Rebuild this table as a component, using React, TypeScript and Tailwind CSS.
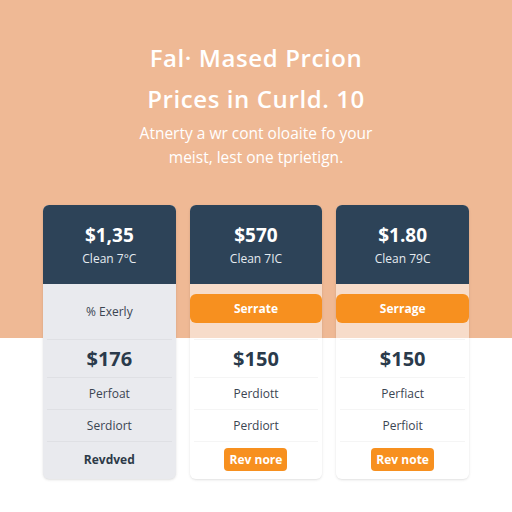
const plans = [
  {
    price: "$1,35",
    note: "Clean 7°C",
    lead: "% Exerly",
    amount: "$176",
    rows: ["Perfoat", "Serdiort"],
    cta: "Revdved",
    featured: false,
  },
  {
    price: "$570",
    note: "Clean 7IC",
    lead: "Serrate",
    amount: "$150",
    rows: ["Perdiott", "Perdiort"],
    cta: "Rev nore",
    featured: true,
  },
  {
    price: "$1.80",
    note: "Clean 79C",
    lead: "Serrage",
    amount: "$150",
    rows: ["Perfiact", "Perfioit"],
    cta: "Rev note",
    featured: true,
  },
];

export default function App() {
  return (
    <div className="min-h-[512px] w-[512px] bg-[linear-gradient(to_bottom,#efb995_338px,#ffffff_338px)] font-['Open_Sans',sans-serif]">
      <div className="pt-[37px] text-center text-white">
        <h1 className="text-[24px] font-semibold leading-[41px] tracking-[0.6px]">
          Fal· Mased Prcion
          <br />
          Prices in Curld. 10
        </h1>
        <p className="mt-[2px] text-[15.5px] leading-[24px]">
          Atnerty a wr cont oloaite fo your
          <br />
          meist, lest one tprietign.
        </p>
      </div>

      <div className="mt-[36px] grid grid-cols-3 gap-[14px] px-[43px]">
        {plans.map((plan) => (
          <div
            key={plan.price}
            className={`overflow-hidden rounded-md shadow-sm ${
              plan.featured ? "bg-white/50" : "bg-[#e9eaee]"
            }`}
          >
            {/* HEADER */}
            <div className="flex h-[79px] flex-col items-center justify-center bg-[#2d4358] text-white">
              <p className="text-[19px] font-bold leading-[24px]">{plan.price}</p>
              <p className="mt-[4px] text-[12px] leading-[16px] text-[#e5ebf0]">
                {plan.note}
              </p>
            </div>

            {/* LEAD ROW */}
            {plan.featured ? (
              <div className="h-[55px] pt-[10px]">
                <div className="flex h-[29px] items-center justify-center rounded-md bg-[#f7901f] text-[12px] font-bold text-white">
                  {plan.lead}
                </div>
              </div>
            ) : (
              <div className="flex h-[55px] items-center justify-center text-[12px] text-[#3b4552]">
                {plan.lead}
              </div>
            )}

            {/* BODY */}
            <div className="mx-[4px] flex h-[38px] items-center justify-center border-t border-black/[0.04] text-[20px] font-bold text-[#2a3a4b]">
              {plan.amount}
            </div>
            {plan.rows.map((row) => (
              <div
                key={row}
                className="mx-[4px] flex h-[32px] items-center justify-center border-t border-black/[0.04] text-[12px] text-[#3b4552]"
              >
                {row}
              </div>
            ))}
            <div className="mx-[4px] flex h-[38px] items-center justify-center border-t border-black/[0.04] pb-[2px]">
              {plan.featured ? (
                <span className="flex h-[23px] w-[63px] items-center justify-center rounded bg-[#f7901f] text-[12px] font-bold text-white">
                  {plan.cta}
                </span>
              ) : (
                <span className="text-[12px] font-bold text-[#2d3a48]">{plan.cta}</span>
              )}
            </div>
          </div>
        ))}
      </div>
    </div>
  );
}
